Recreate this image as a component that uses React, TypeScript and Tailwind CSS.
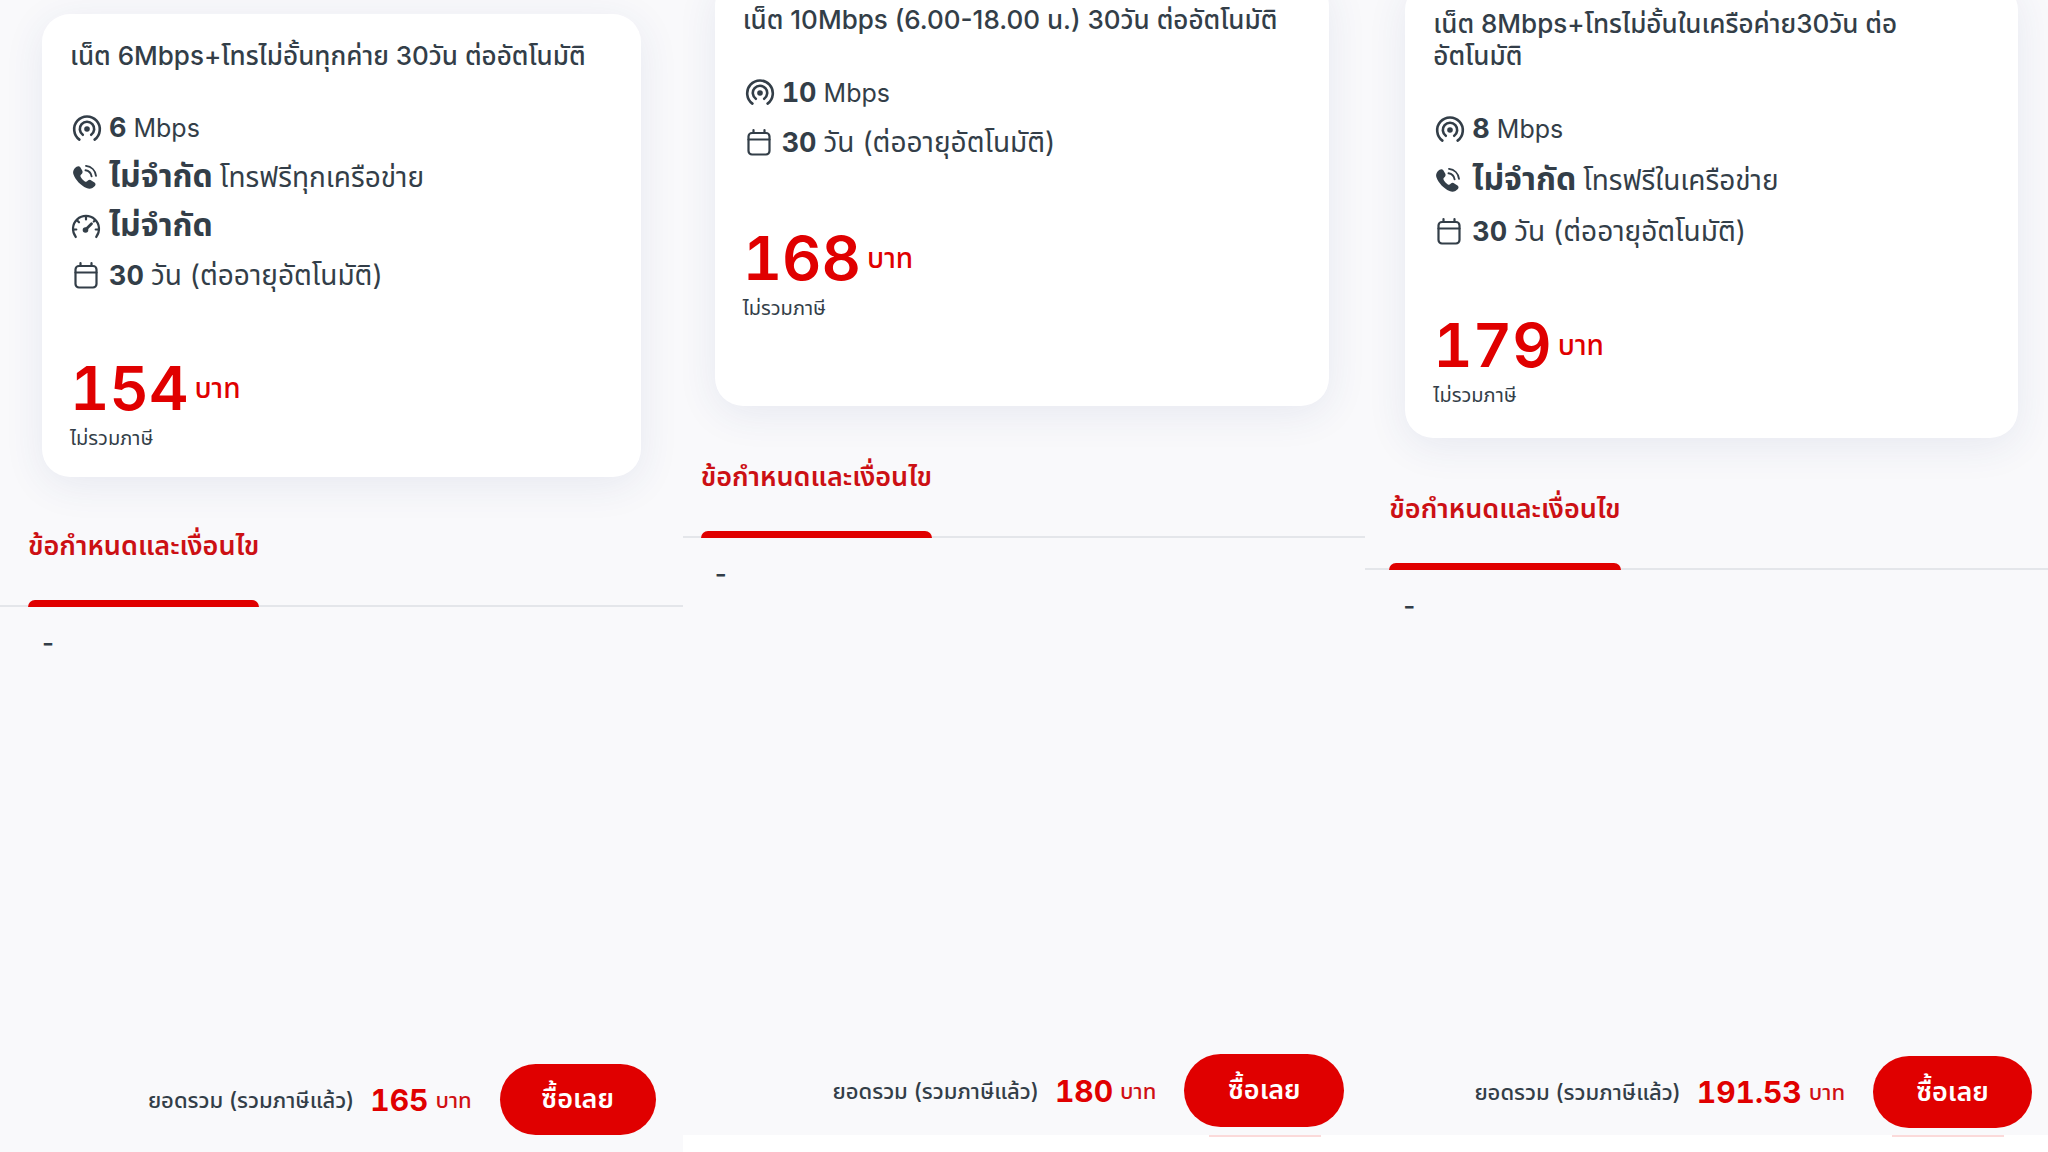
type IconName = "signal" | "phone" | "gauge" | "calendar";

interface Feature {
  icon: IconName;
  value: string;
  detail?: string;
}

interface Plan {
  title: string;
  features: Feature[];
  price: string;
  total: string;
  cardClass: string;
  rowClass: string;
  priceClass: string;
  tabsClass: string;
  contentClass: string;
  footerClass: string;
  buttonClass: string;
  hasStrip: boolean;
}

const plans: Plan[] = [
  {
    title: "เน็ต 6Mbps+โทรไม่อั้นทุกค่าย 30วัน ต่ออัตโนมัติ",
    features: [
      { icon: "signal", value: "6", detail: "Mbps" },
      { icon: "phone", value: "ไม่จำกัด", detail: "โทรฟรีทุกเครือข่าย" },
      { icon: "gauge", value: "ไม่จำกัด" },
      { icon: "calendar", value: "30", detail: "วัน (ต่ออายุอัตโนมัติ)" },
    ],
    price: "154",
    total: "165",
    cardClass: "mt-[14px] mx-[42px] pt-[26px] pb-[27px]",
    rowClass: "h-[49px]",
    priceClass: "mt-[51px]",
    tabsClass: "px-7 pt-[49px]",
    contentClass: "px-[42px]",
    footerClass: "pr-[27px] pb-[17px]",
    buttonClass: "h-[71px] w-[156px]",
    hasStrip: false,
  },
  {
    title: "เน็ต 10Mbps (6.00-18.00 น.) 30วัน ต่ออัตโนมัติ",
    features: [
      { icon: "signal", value: "10", detail: "Mbps" },
      { icon: "calendar", value: "30", detail: "วัน (ต่ออายุอัตโนมัติ)" },
    ],
    price: "168",
    total: "180",
    cardClass: "-mt-[22px] ml-8 mr-9 pt-[26px] pb-[86px]",
    rowClass: "h-[50px]",
    priceClass: "mt-[53px]",
    tabsClass: "px-[18px] pt-[51px]",
    contentClass: "px-8",
    footerClass: "pr-[21px] pb-2",
    buttonClass: "h-[73px] w-[160px]",
    hasStrip: true,
  },
  {
    title: "เน็ต 8Mbps+โทรไม่อั้นในเครือค่าย30วัน ต่ออัตโนมัติ",
    features: [
      { icon: "signal", value: "8", detail: "Mbps" },
      { icon: "phone", value: "ไม่จำกัด", detail: "โทรฟรีในเครือข่าย" },
      { icon: "calendar", value: "30", detail: "วัน (ต่ออายุอัตโนมัติ)" },
    ],
    price: "179",
    total: "191.53",
    cardClass: "-mt-[18px] ml-10 mr-[30px] pt-[26px] pb-[31px]",
    rowClass: "h-[51px]",
    priceClass: "mt-[51px]",
    tabsClass: "px-6 pt-[51px]",
    contentClass: "px-[38px]",
    footerClass: "pr-4 pb-[7px]",
    buttonClass: "h-[72px] w-[159px]",
    hasStrip: true,
  },
];

const isThai = (text: string) => /[\u0E00-\u0E7F]/.test(text);

const FeatureIcon: React.FC<{ name: IconName }> = ({ name }) => {
  const common = {
    viewBox: "0 0 32 32",
    fill: "none",
    stroke: "currentColor",
    strokeLinecap: "round" as const,
    strokeLinejoin: "round" as const,
    className: "size-8 shrink-0",
    "aria-hidden": true,
  };

  if (name === "signal") {
    return (
      <svg {...common} strokeWidth="2.6">
        <circle cx="17" cy="15" r="2.8" fill="currentColor" stroke="none" />
        <path d="M12.8 20.8a7.2 7.2 0 1 1 8.4 0" />
        <path d="M9.4 25.6a12.8 12.8 0 1 1 15.2 0" />
      </svg>
    );
  }
  if (name === "phone") {
    return (
      <svg {...common} strokeWidth="1.9">
        <path
          fill="currentColor"
          stroke="none"
          d="M6.6 3.800c1.400-1 2.900-.8 3.700.5l1.900 3.300c.7 1.200.5 2.500-.5 3.400l-.8.8c-.6.6-.6 1.400-.2 2.200 1 1.800 2.500 3.300 4.200 4.400.8.500 1.600.5 2.200-.1l.8-.7c1-.9 2.300-1 3.400-.2l3.200 2.200c1.200.9 1.400 2.400.4 3.500-2.200 2.500-5.300 3.300-8.400 1.900C10.500 22.300 5.800 17.300 3.500 11.500c-1.100-2.900.3-5.900 3.100-7.700z"
        />
        <path d="M15.500 7.300c3.300.5 5.600 2.800 6.100 6" />
        <path d="M16 2.900c5.400.6 9.300 4.500 10 9.900" />
      </svg>
    );
  }
  if (name === "gauge") {
    return (
      <svg {...common} strokeWidth="2.2">
        <path d="M5.800 25a13 13 0 1 1 20.400 0" />
        <path d="M3.500 17.500h2.800M25.700 17.500h2.800M16 4.500v3M7.200 8.500l1.800 1.800M24.800 8.500l-1 1" />
        <path d="M21.500 11.800l-5 5" strokeWidth="2.8" />
        <circle cx="15.500" cy="18" r="2.8" fill="currentColor" stroke="none" />
      </svg>
    );
  }
  return (
    <svg {...common} strokeWidth="2.2">
      <rect x="5.500" y="5" width="21" height="21.500" rx="3.500" />
      <path d="M5.500 11.500h21M10.500 2v3M21.500 2v3" />
    </svg>
  );
};

const PlanPanel: React.FC<{ plan: Plan }> = ({ plan }) => (
  <section className="flex min-w-0 flex-col overflow-hidden">
    <article
      className={`rounded-[28px] bg-white px-7 shadow-[0_8px_40px_rgba(40,70,130,0.09)] ${plan.cardClass}`}
    >
      <h2 className="pr-4 text-[26px] leading-8 font-medium">{plan.title}</h2>
      <ul className="mt-[33px] flex flex-col">
        {plan.features.map((feature) => (
          <li key={feature.icon} className={`flex items-center gap-[7px] ${plan.rowClass}`}>
            <FeatureIcon name={feature.icon} />
            <p className="leading-8 whitespace-nowrap">
              <strong
                className={`font-bold tabular-nums ${
                  isThai(feature.value) ? "text-[32px]" : "text-[27px]"
                }`}
              >
                {feature.value}
              </strong>
              {feature.detail && (
                <span
                  className={`ml-[7px] ${isThai(feature.detail) ? "text-[28px]" : "text-[25px]"}`}
                >
                  {feature.detail}
                </span>
              )}
            </p>
          </li>
        ))}
      </ul>
      <p className={`flex items-center gap-[6px] text-[#e00000] ${plan.priceClass}`}>
        <span className="text-[61px] leading-[72px] font-semibold tabular-nums">{plan.price}</span>
        <span className="text-[28px] leading-8 font-medium">บาท</span>
      </p>
      <p className="mt-[2px] text-[20px] leading-6">ไม่รวมภาษี</p>
    </article>

    <div role="tablist" className={`flex border-b-2 border-[#e4e6ea] ${plan.tabsClass}`}>
      <button
        type="button"
        role="tab"
        aria-selected="true"
        className="flex flex-col text-[27px] leading-10 font-semibold text-[#cc1014]"
      >
        ข้อกำหนดและเงื่อนไข
        <span className="mt-[34px] -mb-[2px] h-[7px] w-full rounded-t-lg bg-[#e00000]" />
      </button>
    </div>
    <p className={`flex-1 pt-5 text-[26px] leading-8 font-medium ${plan.contentClass}`}>-</p>

    <div className={`flex items-center justify-end ${plan.footerClass}`}>
      <span className="text-[22px] leading-8 font-medium">ยอดรวม (รวมภาษีแล้ว)</span>
      <span className="ml-4 text-[30px] leading-8 font-bold text-[#e00000] tabular-nums">
        {plan.total}
      </span>
      <span className="ml-[7px] text-[22px] leading-8 font-medium text-[#d01014]">บาท</span>
      <button
        type="button"
        className={`ml-7 rounded-full bg-[#e00000] text-[27px] font-semibold text-white ${plan.buttonClass}`}
      >
        ซื้อเลย
      </button>
    </div>
    {plan.hasStrip && (
      <div className="h-[17px] bg-white pr-11">
        <div className="ml-auto h-[2px] w-[112px] bg-[#fbdada]" />
      </div>
    )}
  </section>
);

const App: React.FC = () => (
  <main className="grid h-screen grid-cols-3 overflow-hidden bg-[#f9f9fb] font-[Inter,'Noto_Sans_Thai','Noto_Sans',sans-serif] text-[#333e48]">
    {plans.map((plan) => (
      <PlanPanel key={plan.title} plan={plan} />
    ))}
  </main>
);

export default App;
